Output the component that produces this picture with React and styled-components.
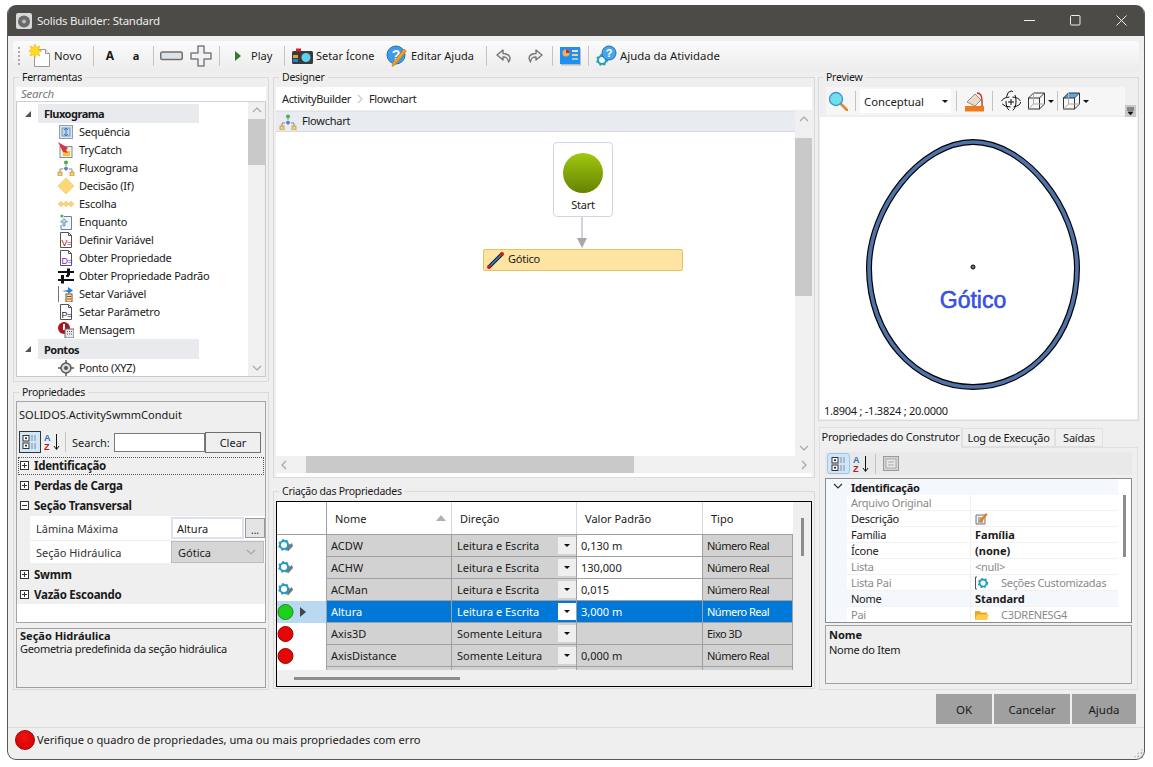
import React from 'react';
import styled, { createGlobalStyle } from 'styled-components';

const GlobalStyle = createGlobalStyle`
  html, body { margin: 0; padding: 0; background: #fff; }
  body { font-family: "Noto Sans", sans-serif; font-size: 11px; letter-spacing: -0.25px; color: #1a1a1a; }
  * { box-sizing: border-box; }
  #root { width: 1153px; height: 767px; overflow: hidden; }
`;

const Page = styled.div`
  width: 1153px;
  height: 767px;
  padding: 5px 8px 7px 7px;
`;

const Win = styled.div`
  height: 755px;
  display: flex;
  flex-direction: column;
  background: #efefef;
  border: 1px solid #5a5855;
  border-top: 0;
  border-radius: 9px;
  overflow: hidden;
`;

const TitleBar = styled.div`
  height: 31px;
  flex: none;
  background: #4d4b48;
  color: #ececec;
  display: flex;
  align-items: center;
  padding-left: 8px;
  font-size: 11.5px;
`;

const TitleText = styled.span`
  margin-left: 5px;
  flex: 1;
`;

const WinBtn = styled.div`
  width: 46px;
  height: 31px;
  display: flex;
  align-items: center;
  justify-content: center;
`;

const Toolbar = styled.div`
  height: 30px;
  flex: none;
  margin: 5px 5px 0;
  display: flex;
  align-items: center;
  background: linear-gradient(#fbfbfb, #ececec);
  border-radius: 3px 3px 0 0;
  letter-spacing: 0;
`;

const Grip = styled.div`
  width: 2px;
  height: 18px;
  margin-left: 5px;
  background: repeating-linear-gradient(#a8a8a8 0 2px, transparent 2px 4px);
`;

const Tool = styled.div`
  width: ${p => p.$w}px;
  margin-left: ${p => p.$ml || 0}px;
  flex: none;
  display: flex;
  align-items: center;
  gap: 3px;
  white-space: nowrap;
  font-size: ${p => p.$size || 11}px;
  font-weight: ${p => (p.$bold ? 700 : 400)};
  justify-content: ${p => (p.$center ? 'center' : 'flex-start')};
`;

const ToolText = styled.span`
  margin-top: -2px;
  font-size: ${p => p.$size || 11}px;
`;

const Sep = styled.div`
  width: 1px;
  height: 20px;
  flex: none;
  margin-left: ${p => p.$ml || 0}px;
  background: #c4c4c4;
`;

const Main = styled.div`
  height: 619px;
  flex: none;
  margin: 0 5px;
  display: flex;
  gap: 4px;
`;

const Col = styled.div`
  width: ${p => p.$w}px;
  margin-left: ${p => p.$ml || 0}px;
  flex: none;
  display: flex;
  flex-direction: column;
`;

const Group = styled.fieldset`
  margin: ${p => p.$mt || 0}px 0 0;
  padding: ${p => p.$pt ?? 4}px ${p => p.$px ?? 2}px 0;
  height: ${p => p.$h}px;
  min-width: 0;
  flex: none;
  border: 1px solid #dadada;
  display: flex;
  flex-direction: column;
`;

const Legend = styled.legend`
  margin-left: 3px;
  padding: 0 3px;
  font-size: 10.5px;
  letter-spacing: -0.25px;
  line-height: 13px;
  height: 12px;
`;

const SearchBar = styled.div`
  height: 15px;
  flex: none;
  background: #fff;
  border-bottom: 1px solid #ccd0da;
  padding-left: 5px;
  font-style: italic;
  color: #777;
  font-size: 11.5px;
  line-height: 14px;
`;

const TreeBox = styled.div`
  height: 275px;
  flex: none;
  display: flex;
  background: #fff;
  border: 1px solid #c6cad2;
  border-top: 0;
`;

const TreeList = styled.div`
  flex: 1;
  padding-top: 2px;
  overflow: hidden;
`;

const TreeCat = styled.div`
  height: ${p => p.$h}px;
  display: flex;
  align-items: center;
  padding-left: 7px;
`;

const CatLabel = styled.div`
  margin-left: 6px;
  width: 161px;
  height: 100%;
  background: #e8eaed;
  font-weight: 700;
  letter-spacing: -0.5px;
  padding-left: 6px;
  display: flex;
  align-items: center;
`;

const TreeItem = styled.div`
  height: 18px;
  display: flex;
  align-items: center;
  padding: 0 0 2px 40px;
  white-space: nowrap;
`;

const TreeIcon = styled.span`
  width: 18px;
  height: 18px;
  margin: 2px 4px 0 0;
  display: flex;
  align-items: center;
  justify-content: center;
`;

const VBar = styled.div`
  width: 17px;
  flex: none;
  display: flex;
  flex-direction: column;
  background: #f0f0f0;
`;

const VArrow = styled.div`
  height: 17px;
  flex: none;
  display: flex;
  align-items: center;
  justify-content: center;
  margin-top: ${p => (p.$end ? 'auto' : 0)};
`;

const VThumb = styled.div`
  height: ${p => p.$h}px;
  margin-top: ${p => p.$mt || 0}px;
  flex: none;
  background: #c9c9c9;
`;

const PropBox = styled.div`
  height: 222px;
  flex: none;
  border: 1px solid #a6a6a6;
  display: flex;
  flex-direction: column;
  background: #efefef;
  letter-spacing: 0;
`;

const TypeName = styled.div`
  height: 26px;
  flex: none;
  padding: 0 0 2px 2px;
  display: flex;
  align-items: center;
`;

const PropTools = styled.div`
  height: 28px;
  flex: none;
  display: flex;
  align-items: center;
  padding-left: 2px;
`;

const SelIcon = styled.div`
  width: ${p => p.$w}px;
  height: ${p => p.$h}px;
  flex: none;
  display: flex;
  align-items: center;
  justify-content: center;
  background: #cfe5f8;
  border: 1px solid ${p => p.$line};
  border-radius: ${p => p.$r || 0}px;
`;

const PlainIcon = styled.div`
  margin-left: ${p => p.$ml || 0}px;
  flex: none;
  display: flex;
  align-items: center;
`;

const FilterLabel = styled.span`
  margin-left: 6px;
  width: 42px;
  flex: none;
`;

const FilterInput = styled.div`
  width: 91px;
  height: 19px;
  flex: none;
  background: #fff;
  border: 1px solid #7a7a7a;
`;

const ClearBtn = styled.div`
  width: 56px;
  height: 21px;
  flex: none;
  border: 1px solid #707070;
  background: #efefef;
  display: flex;
  align-items: center;
  justify-content: center;
`;

const PCat = styled.div`
  height: 20px;
  flex: none;
  display: flex;
  align-items: center;
  gap: 5px;
  padding: 0 0 ${p => (p.$up ? 2 : 0)}px 1px;
  font-weight: 700;
  font-size: 11.5px;
  letter-spacing: -0.25px;
  outline: ${p => (p.$focus ? '1px dotted #555' : 'none')};
  outline-offset: -2px;
`;

const PlusBox = styled.span`
  width: 9px;
  height: 9px;
  flex: none;
  margin-left: 2px;
  border: 1px solid #333;
  background: #fff;
  position: relative;
  &::before {
    content: '';
    position: absolute;
    left: 1px;
    right: 1px;
    top: 3px;
    height: 1px;
    background: #333;
  }
  &::after {
    content: '';
    display: ${p => (p.$open ? 'none' : 'block')};
    position: absolute;
    top: 1px;
    bottom: 1px;
    left: 3px;
    width: 1px;
    background: #333;
  }
`;

const PRow = styled.div`
  height: ${p => p.$h}px;
  flex: none;
  margin-left: 13px;
  display: flex;
  background: #fff;
  border-bottom: 1px solid #efefef;
`;

const PLabel = styled.div`
  width: 141px;
  flex: none;
  padding-left: 6px;
  display: flex;
  align-items: center;
  color: #333;
`;

const PInput = styled.div`
  width: 73px;
  flex: none;
  margin-top: 1px;
  height: 22px;
  background: #fff;
  border: 2px solid #dde3ee;
  padding-left: 4px;
  display: flex;
  align-items: center;
`;

const DotsBtn = styled.div`
  width: 20px;
  height: 20px;
  margin: 2px 0 0 1px;
  background: #e4e4e4;
  border: 1px solid #9a9a9a;
  display: flex;
  align-items: flex-end;
  justify-content: center;
  line-height: 14px;
  font-size: 10px;
`;

const PCombo = styled.div`
  width: 93px;
  flex: none;
  background: #d6d6d6;
  border: 1px solid #bdbdbd;
  padding: 0 6px;
  display: flex;
  align-items: center;
  justify-content: space-between;
`;

const PFill = styled.div`
  flex: 1;
  background: #fff;
`;

const HelpBox = styled.div`
  height: ${p => p.$h}px;
  margin-top: ${p => p.$mt}px;
  flex: none;
  border: 1px solid #a0a0a0;
  padding: ${p => p.$pt}px 3px 0;
  line-height: ${p => p.$lh}px;
  background: #efefef;
  letter-spacing: -0.3px;
`;

const HelpTitle = styled.div`
  font-weight: 700;
  letter-spacing: 0;
`;

const Crumb = styled.div`
  height: 23px;
  flex: none;
  background: #fff;
  display: flex;
  align-items: center;
  padding-left: 6px;
  gap: 3px;
  color: #222;
  letter-spacing: -0.35px;
`;

const DesignerBody = styled.div`
  margin-top: 1px;
  height: 345px;
  flex: none;
  display: flex;
`;

const DesignerMain = styled.div`
  flex: 1;
  display: flex;
  flex-direction: column;
  background: #fff;
`;

const FlowHead = styled.div`
  height: 21px;
  flex: none;
  background: #e8ebef;
  border-top: 1px solid #dfe2e8;
  border-bottom: 1px solid #d6d9e4;
  display: flex;
  align-items: center;
  padding-left: 3px;
  gap: 5px;
`;

const FlowHeadText = styled.span`
  margin-top: -3px;
`;

const Canvas = styled.div`
  flex: 1;
  position: relative;
`;

const StartNode = styled.div`
  position: absolute;
  left: 277px;
  top: 10px;
  width: 60px;
  height: 75px;
  background: #fff;
  border: 1px solid #d0d6e4;
  border-radius: 4px;
  display: flex;
  flex-direction: column;
  align-items: center;
  padding-top: 10px;
`;

const StartDot = styled.div`
  width: 40px;
  height: 40px;
  border-radius: 50%;
  background: linear-gradient(#a0c810, #668200);
`;

const StartLabel = styled.div`
  margin-top: 4px;
`;

const Connector = styled.svg`
  position: absolute;
  left: 295px;
  top: 85px;
`;

const ActivityNode = styled.div`
  position: absolute;
  left: 207px;
  top: 117px;
  width: 200px;
  height: 22px;
  background: #fde4a2;
  border: 1px solid #e3c264;
  border-radius: 2px;
  display: flex;
  align-items: center;
  padding-left: 2px;
  gap: 3px;
`;

const ActivityText = styled.span`
  margin-top: -3px;
`;

const HBar = styled.div`
  height: 17px;
  flex: none;
  background: #f0f0f0;
  display: flex;
  align-items: center;
`;

const HArrow = styled.div`
  width: 17px;
  flex: none;
  display: flex;
  justify-content: center;
  margin-left: ${p => (p.$end ? 'auto' : 0)};
`;

const HThumb = styled.div`
  height: 17px;
  width: ${p => p.$w}px;
  margin-left: ${p => p.$ml}px;
  background: #c9c9c9;
`;

const WhiteStrip = styled.div`
  height: 4px;
  flex: none;
  background: #fff;
`;

const TableBox = styled.div`
  height: 186px;
  flex: none;
  border: 1px solid #000;
  display: flex;
  flex-direction: column;
  background: #efefef;
  letter-spacing: 0;
`;

const TableMid = styled.div`
  height: 168px;
  flex: none;
  display: flex;
`;

const TableGrid = styled.div`
  width: 516px;
  flex: none;
  overflow: hidden;
  background: #fff;
`;

const THeadRow = styled.div`
  height: 33px;
  display: grid;
  grid-template-columns: 50px 125px 125px 126px 90px;
  border-bottom: 1px solid #a0a0a0;
`;

const THead = styled.div`
  display: flex;
  align-items: center;
  justify-content: space-between;
  padding: 0 5px 0 8px;
  border-right: 1px solid #d8d8d8;
  &:first-child {
    border-right-color: #a0a0a0;
  }
  &:last-child {
    border-right: 0;
  }
`;

const TRow = styled.div`
  height: 22px;
  display: grid;
  grid-template-columns: 50px 125px 125px 126px 90px;
`;

const RowHead = styled.div`
  display: flex;
  align-items: center;
  gap: 5px;
  background: ${p => (p.$sel ? '#b9d9f2' : '#fff')};
  border-right: 1px solid #a0a0a0;
`;

const Cell = styled.div`
  display: flex;
  align-items: center;
  padding-left: ${p => (p.$combo ? 5 : 4)}px;
  white-space: nowrap;
  border-right: 1px solid #a0a0a0;
  border-bottom: 1px solid #a0a0a0;
  background: ${p => (p.$sel ? '#0078d7' : p.$white ? '#fff' : '#d2d2d2')};
  color: ${p => (p.$sel ? '#fff' : '#1a1a1a')};
  letter-spacing: ${p => (p.$tight ? '-0.5px' : '0')};
`;

const DropBtn = styled.div`
  width: 18px;
  height: 17px;
  margin-left: auto;
  display: flex;
  align-items: center;
  justify-content: center;
  background: ${p => (p.$sel ? '#fff' : '#efefef')};
  &::after {
    content: '';
    border-left: 3px solid transparent;
    border-right: 3px solid transparent;
    border-top: 3px solid #111;
  }
`;

const TScroll = styled.div`
  flex: 1;
  display: flex;
  justify-content: center;
`;

const TScrollThumb = styled.div`
  width: 3px;
  height: 38px;
  margin-top: 16px;
  background: #8c8c8c;
`;

const TBottom = styled.div`
  flex: 1;
  padding: 7px 0 0 17px;
`;

const TBottomThumb = styled.div`
  width: 166px;
  height: 3px;
  background: #8c8c8c;
`;

const PreviewTools = styled.div`
  height: 28px;
  flex: none;
  margin: 0 12px 2px 6px;
  display: flex;
  align-items: center;
  background: #f6f6f6;
  position: relative;
  letter-spacing: 0;
`;

const Overflow = styled.div`
  position: absolute;
  right: -11px;
  bottom: -2px;
  width: 11px;
  height: 12px;
  background: #c8c8c8;
  display: flex;
  align-items: center;
  justify-content: center;
`;

const ComboBox = styled.div`
  width: 91px;
  margin-left: 4px;
  height: 24px;
  flex: none;
  background: #fff;
  display: flex;
  align-items: center;
  justify-content: space-between;
  padding: 0 3px 0 4px;
  font-size: 11.3px;
`;

const ComboArrow = styled.span`
  border-left: 3px solid transparent;
  border-right: 3px solid transparent;
  border-top: 3px solid #111;
`;

const Surface = styled.div`
  flex: 1;
  background: #fff;
  display: flex;
  flex-direction: column;
`;

const ShapeView = styled.svg`
  display: block;
  flex: none;
`;

const Coords = styled.div`
  height: 18px;
  flex: none;
  padding-left: 4px;
  display: flex;
  align-items: center;
`;

const Tabs = styled.div`
  margin-top: 6px;
  height: 20px;
  flex: none;
  display: flex;
  align-items: flex-end;
  padding-left: 1px;
  position: relative;
  z-index: 1;
`;

const Tab = styled.div`
  width: ${p => p.$w}px;
  height: ${p => (p.$active ? 21 : 19)}px;
  margin-bottom: ${p => (p.$active ? -1 : 0)}px;
  padding-bottom: ${p => (p.$active ? 3 : 0)}px;
  flex: none;
  background: #f0f0f0;
  border: 1px solid #e0e0e0;
  border-bottom: ${p => (p.$active ? '0' : '1px solid #e0e0e0')};
  display: flex;
  align-items: center;
  justify-content: center;
  white-space: nowrap;
`;

const TabPanel = styled.div`
  width: 319px;
  margin-left: 1px;
  height: 243px;
  flex: none;
  border: 1px solid #e0e0e0;
  padding: 4px 5px 0 5px;
  display: flex;
  flex-direction: column;
`;

const PanelTools = styled.div`
  height: 23px;
  flex: none;
  background: #e9e9e9;
  display: flex;
  align-items: center;
  padding-left: 2px;
`;

const PGrid = styled.div`
  margin-top: 3px;
  height: 145px;
  flex: none;
  border: 1px solid #8c8c8c;
  display: flex;
  background: #fff;
  overflow: hidden;
`;

const PGridRows = styled.div`
  width: 292px;
  flex: none;
`;

const GridCat = styled.div`
  height: 16px;
  background: #f4f7fb;
  display: flex;
  align-items: center;
  font-weight: 700;
  padding-left: 25px;
  position: relative;
`;

const GridChevron = styled.span`
  position: absolute;
  left: 6px;
  top: 1px;
  display: flex;
`;

const GridRow = styled.div`
  height: 16px;
  display: flex;
  margin-left: 21px;
  background: ${p => (p.$hi ? '#f4f7fb' : '#fff')};
  border-bottom: 1px solid #f2f2f2;
`;

const GridGutter = styled.div`
  background: #f4f7fb;
`;

const GridName = styled.div`
  width: 124px;
  flex: none;
  padding-left: 4px;
  border-right: 1px solid #f0f0f0;
  display: flex;
  align-items: center;
  color: ${p => (p.$muted ? '#8a8a8a' : '#1a1a1a')};
`;

const GridValue = styled.div`
  flex: 1;
  padding-left: 4px;
  display: flex;
  align-items: center;
  gap: 12px;
  white-space: nowrap;
  font-weight: ${p => (p.$bold ? 700 : 400)};
  letter-spacing: ${p => (p.$bold ? 0 : '-0.3px')};
  color: ${p => (p.$muted ? '#8a8a8a' : '#1a1a1a')};
`;

const GridScroll = styled.div`
  flex: 1;
  display: flex;
  justify-content: center;
`;

const GridThumb = styled.div`
  width: 3px;
  height: 62px;
  margin-top: 16px;
  background: #8c8c8c;
`;

const ButtonRow = styled.div`
  height: 30px;
  flex: none;
  margin: 4px 8px 0 0;
  display: flex;
  justify-content: flex-end;
  gap: 2px;
  letter-spacing: 0;
`;

const Btn = styled.div`
  width: ${p => p.$w}px;
  background: #a0a0a0;
  display: flex;
  align-items: center;
  justify-content: center;
  font-size: 11.5px;
`;

const BottomLine = styled.div`
  height: 1px;
  flex: none;
  margin-top: 3px;
  background: #dcdcdc;
`;

const StatusBar = styled.div`
  flex: 1;
  display: flex;
  align-items: center;
  padding: 0 0 8px 7px;
  position: relative;
  letter-spacing: 0;
  font-size: 11.15px;
`;

const StatusDot = styled.div`
  width: 20px;
  height: 20px;
  flex: none;
  margin-right: 2px;
  border-radius: 50%;
  background: radial-gradient(circle at 45% 35%, #f51010, #c80000);
  border: 1px solid #a00000;
`;

const SizeGrip = styled.div`
  position: absolute;
  right: 1px;
  bottom: 1px;
  width: 10px;
  height: 10px;
  background: radial-gradient(circle, #b0b0b0 1px, transparent 1.2px) 0 0 / 3.4px 3.4px;
  clip-path: polygon(100% 0, 100% 100%, 0 100%);
`;

const IconSvg = styled.svg`
  display: block;
  flex: none;
`;

const Ic = ({ w = 16, h = 16, children }) => (
  <IconSvg width={w} height={h} viewBox={`0 0 ${w} ${h}`}>
    {children}
  </IconSvg>
);

const Gear = ({ x = 8, y = 8, r = 5, c = '#1a9ab8' }) => (
  <g>
    <circle cx={x} cy={y} r={r} fill="none" stroke={c} strokeWidth={r * 0.5} />
    <circle cx={x} cy={y} r={r * 1.25} fill="none" stroke={c} strokeWidth={r * 0.45} strokeDasharray={`${r * 0.5} ${r * 0.55}`} />
  </g>
);

const NovoIcon = () => (
  <Ic w={22} h={24}>
    <path d="M5.5 5.5h11l4 4v13h-15z" fill="#fff" stroke="#999" />
    <path d="M16.5 5.5v4h4" fill="#eee" stroke="#999" />
    <path d="M6 0l1.4 3.4L11 2l-1.6 3.6L13 7l-3.6 1.4L11 12 7.4 10.4 6 14 4.6 10.4 1 12l1.6-3.6L-1 7l3.6-1.4L1 2l3.6 1.4z" fill="#ffdc1e" stroke="#f0a800" strokeWidth=".5" />
  </Ic>
);

const MinusIcon = () => (
  <Ic w={23} h={12}>
    <rect x=".75" y="2" width="21.5" height="7.5" rx="1.5" fill="#dde2e8" stroke="#6f6f6f" strokeWidth="1.5" />
  </Ic>
);

const PlusIcon = () => (
  <Ic w={22} h={22}>
    <path d="M8 1h6v7h7v6h-7v7H8v-7H1V8h7z" fill="#f0f2f5" stroke="#7d7d7d" strokeWidth="1.5" strokeLinejoin="round" />
  </Ic>
);

const PlayIcon = () => (
  <Ic w={9} h={12}>
    <path d="M2 1l6 5-6 5z" fill="#2f7d2f" />
  </Ic>
);

const CameraIcon = () => (
  <Ic w={21} h={16}>
    <rect x="0" y="3" width="21" height="13" rx="1.5" fill="#3a3a3a" />
    <rect x="4" y="0.5" width="5" height="3" fill="#e02020" />
    <rect x="1" y="7" width="5" height="3" fill="#f0a020" />
    <rect x="1" y="11" width="5" height="3" fill="#1e80e0" />
    <circle cx="14" cy="9.5" r="4.5" fill="#5fd0f0" />
  </Ic>
);

const HelpPenIcon = () => (
  <Ic w={22} h={22}>
    <circle cx="10" cy="10" r="9" fill="#3f9be8" stroke="#1d6fc0" />
    <text x="10" y="15" fontSize="14" fontWeight="700" fill="#fff" textAnchor="middle" fontFamily="Liberation Sans, sans-serif">?</text>
    <path d="M20.5 6L9 20l-3 1.5.5-3.5L18 4z" fill="#f0a020" stroke="#c86a00" strokeWidth=".5" />
  </Ic>
);

const UndoIcon = ({ flip }) => (
  <Ic w={17} h={15}>
    <g transform={flip ? 'translate(17 0) scale(-1 1)' : undefined}>
      <path d="M7 1L1 6l6 5V8c3.5 0 5 1 5.5 5 2.5-3 2.5-8-5.5-8.5z" fill="#eceff2" stroke="#777" strokeWidth="1.4" strokeLinejoin="round" />
    </g>
  </Ic>
);

const ChartIcon = () => (
  <Ic w={21} h={19}>
    <rect x="1" y="1.5" width="20" height="17" fill="#bbb" />
    <rect x="0" y="0" width="20" height="17" fill="#1e90f0" />
    <circle cx="6" cy="6" r="3.5" fill="#f0b060" />
    <path d="M6 6V2.5A3.5 3.5 0 0 1 9.5 6z" fill="#e02020" />
    <rect x="12" y="3" width="6" height="2" fill="#f4e0a0" />
    <rect x="12" y="7" width="6" height="2" fill="#e8d0a0" />
    <rect x="12" y="11" width="6" height="2" fill="#a8c0d8" />
  </Ic>
);

const GearHelpIcon = () => (
  <Ic w={22} h={22}>
    <Gear x={7} y={15} r={4} c="#2a9fb4" />
    <circle cx="14" cy="8" r="7" fill="#4aa6e8" stroke="#1d6fc0" />
    <text x="14" y="12" fontSize="11" fontWeight="700" fill="#fff" textAnchor="middle" fontFamily="Liberation Sans, sans-serif">?</text>
  </Ic>
);

const Tri = () => (
  <Ic w={8} h={8}>
    <path d="M7 1v6H1z" fill="#555" />
  </Ic>
);

const Chevron = ({ d, c = '#a6a6a6' }) => {
  const paths = {
    up: 'M2 7l4-4 4 4',
    down: 'M2 4l4 4 4-4',
    left: 'M7 2L3 6l4 4',
    right: 'M4 2l4 4-4 4',
  };
  return (
    <Ic w={12} h={12}>
      <path d={paths[d]} fill="none" stroke={c} strokeWidth="1.2" />
    </Ic>
  );
};

const SeqIcon = () => (
  <Ic>
    <rect x="1.5" y="1.5" width="13" height="13" fill="#dbe6f0" stroke="#8aa0b4" />
    <rect x="4" y="4" width="8" height="8" fill="#bcd4ea" stroke="#7d98b0" />
    <path d="M8 4v8M6 10l2 2 2-2M6 6l2-2 2 2" stroke="#3a78c0" fill="none" />
  </Ic>
);

const TryIcon = () => (
  <Ic>
    <rect x="2" y="4.5" width="12" height="11" fill="#f0f0e8" stroke="#8a8a8a" />
    <rect x="5" y="9" width="7" height="5" fill="#f4c040" />
    <path d="M0 0l10 6-2 2 2 3-5-1z" fill="#e03040" />
  </Ic>
);

const FlowIcon = () => (
  <Ic w={18} h={16}>
    <circle cx="9" cy="2.5" r="2" fill="#4caf50" />
    <path d="M8 7h2l1.5 1.5L9 11 6.5 8.5z" fill="#5a86c8" />
    <path d="M9 4.5v2M3 14V9h3M15 14V9h-3" stroke="#8a8a8a" fill="none" />
    <rect x="1" y="12" width="4" height="4" fill="#f4d070" stroke="#b08030" strokeWidth=".6" />
    <rect x="13" y="12" width="4" height="4" fill="#f4d070" stroke="#b08030" strokeWidth=".6" />
  </Ic>
);

const DiamondIcon = () => (
  <Ic>
    <path d="M8 0l8 8-8 8-8-8z" fill="#fdd774" stroke="#e8c060" strokeWidth=".5" />
  </Ic>
);

const ChoiceIcon = () => (
  <Ic>
    <path d="M3 5l3 3-3 3-3-3zM8 5l3 3-3 3-3-3zM13 5l3 3-3 3-3-3z" fill="#fbd37c" stroke="#e8bc60" strokeWidth=".4" />
  </Ic>
);

const WhileIcon = () => (
  <Ic>
    <path d="M6 2.5h7.5v13H3V11" fill="#f2f6fb" stroke="#6e8296" />
    <circle cx="4" cy="2" r="1.6" fill="#4caf50" />
    <path d="M5 12V8H2.5L6 4.5 9.5 8H7v4z" fill="#bcd8f0" stroke="#4d7eb0" strokeWidth=".7" />
  </Ic>
);

const DocIcon = ({ label, color }) => (
  <Ic>
    <path d="M2.5.5h8l3 3v12h-11z" fill="#fff" stroke="#555" />
    <path d="M10.5.5v3h3" fill="none" stroke="#555" />
    <text x="3.5" y="13.5" fontSize="9" letterSpacing="-.5" fontFamily="Liberation Sans, sans-serif" fill={color}>{label}</text>
  </Ic>
);

const SlidersIcon = () => (
  <Ic>
    <path d="M0 4h16M0 12h16" stroke="#111" strokeWidth="2" />
    <path d="M3 8h10" stroke="#111" strokeWidth="2" strokeDasharray="3 2" />
    <rect x="9" y="0.5" width="3" height="7" fill="#111" />
    <rect x="3" y="8.5" width="3" height="7" fill="#111" />
  </Ic>
);

const SetVarIcon = () => (
  <Ic>
    <path d="M.5 0v16" stroke="#777" />
    <rect x="8" y="8" width="6" height="8" fill="#f2e2c8" stroke="#8a4a10" />
    <path d="M9 10.5h4M9 13h4" stroke="#8a4a10" />
    <path d="M4 5l6-1V1l5 3.5-5 3.5V6z" fill="#2a7fd8" />
  </Ic>
);

const MsgIcon = () => (
  <Ic>
    <circle cx="6" cy="6" r="6" fill="#a81820" />
    <rect x="5" y="2" width="2" height="6" fill="#fff" />
    <rect x="7" y="7" width="9" height="9" fill="#e8e8e8" stroke="#666" />
    <path d="M9 9.5h1M11 9.5h1M13 9.5h1M9 12h1M11 12h1M13 12h1" stroke="#555" />
  </Ic>
);

const PointIcon = () => (
  <Ic>
    <circle cx="8" cy="8" r="5" fill="#d8d8d8" stroke="#555" strokeWidth="1.4" />
    <circle cx="8" cy="8" r="2" fill="#555" />
    <path d="M8 0v3M8 13v3M0 8h3M13 8h3" stroke="#555" strokeWidth="1.4" />
  </Ic>
);

const PencilLine = () => (
  <Ic w={19} h={19}>
    <path d="M3 16L16 3" stroke="#111" strokeWidth="3.5" />
    <path d="M3.5 15.5L15.5 3.5" stroke="#3a80e0" strokeWidth="1.6" />
    <circle cx="3" cy="16" r="2" fill="#d01818" />
    <circle cx="16" cy="3" r="2" fill="#d01818" />
  </Ic>
);

const CategorizedIcon = () => (
  <Ic w={16} h={16}>
    <rect x="1" y="1.5" width="6" height="5.5" fill="#fff" stroke="#333" />
    <rect x="1" y="9" width="6" height="5.5" fill="#fff" stroke="#333" />
    <path d="M3 4.2h2M3 11.7h2M4 3.2v2M4 10.7v2" stroke="#111" />
    <path d="M9 2h6M9 4h6M9 6h6M9 10h6M9 12h6M9 14h6" stroke="#7d8da0" strokeDasharray="2 1" />
  </Ic>
);

const AZIcon = () => (
  <Ic w={16} h={18}>
    <text x="0" y="8" fontSize="9" fontWeight="700" fill="#2a70c8" fontFamily="Liberation Sans, sans-serif">A</text>
    <text x="0" y="17" fontSize="9" fontWeight="700" fill="#b02020" fontFamily="Liberation Sans, sans-serif">Z</text>
    <path d="M12.5 1v15M10 13l2.5 3.5L15 13" stroke="#111" fill="none" />
  </Ic>
);

const PagesIcon = () => (
  <Ic w={16} h={15}>
    <rect x=".5" y=".5" width="15" height="14" fill="#d4d4d4" stroke="#9a9a9a" />
    <rect x="3" y="3" width="10" height="9" fill="#e8e8e8" stroke="#a8a8a8" />
    <path d="M5 6h6M5 9h6" stroke="#a8a8a8" />
  </Ic>
);

const MagnifierIcon = () => (
  <Ic w={20} h={20}>
    <path d="M12 12l7 7" stroke="#e08a30" strokeWidth="2.6" strokeLinecap="round" />
    <circle cx="8" cy="8" r="6.5" fill="#6fe0e8" stroke="#4a90e0" strokeWidth="1.4" />
  </Ic>
);

const BucketIcon = () => (
  <Ic w={20} h={21}>
    <path d="M2 11l8-8 6 6-6 6z" fill="#eadcc8" stroke="#9a8a78" />
    <path d="M12 2c3 0 5 2 5 8v5" fill="none" stroke="#c83020" strokeWidth="1.4" />
    <rect x="0" y="15" width="19" height="5.5" fill="#ee7a20" />
  </Ic>
);

const OrbitIcon = () => (
  <Ic w={22} h={22}>
    <ellipse cx="11" cy="12" rx="9.5" ry="5" fill="none" stroke="#111" strokeDasharray="9 3" />
    <ellipse cx="11" cy="11" rx="5" ry="10" fill="none" stroke="#111" strokeDasharray="10 4" />
    <path d="M11 9v6M8 12h6" stroke="#111" />
  </Ic>
);

const CubeIcon = ({ shaded }) => (
  <Ic w={18} h={18}>
    {shaded && <path d="M1 6l5-5h11l-5 5z" fill="#5ba8e0" />}
    <rect x="1.5" y="6" width="11" height="11" fill="none" stroke="#333" />
    <path d="M1.5 6l5-5h11v11l-5 5M17.5 1l-5 5" fill="none" stroke="#333" />
    <path d="M6.5 1v11h11M6.5 12l-5 5" fill="none" stroke="#aaa" />
  </Ic>
);

const RowGear = () => (
  <Ic w={17} h={18}>
    <path d="M9 11l6-5 1 3-5 5.5z" fill="#777" />
    <Gear x={7} y={8} r={4} c="#2a9ac0" />
  </Ic>
);

const Led = ({ c, d }) => (
  <Ic w={17} h={18}>
    <circle cx="8.5" cy="9" r="7.5" fill={c} stroke={d} />
  </Ic>
);

const SmallGear = () => (
  <Ic w={14} h={14}>
    <path d="M2 1H.5v12H2" fill="none" stroke="#555" />
    <Gear x={8} y={7} r={3.5} c="#1f9cc0" />
  </Ic>
);

const FolderIcon = () => (
  <Ic w={14} h={12}>
    <path d="M0 2h5l1 1.5h6V11H0z" fill="#f0a818" />
    <path d="M2 5.5h12L12 11H0z" fill="#fccc50" />
  </Ic>
);

const EditIcon = () => (
  <Ic w={13} h={13}>
    <path d="M1 3h9v9H1z" fill="#eee" stroke="#777" />
    <path d="M3 6h4M3 8h5M3 10h5" stroke="#777" />
    <path d="M4 9l7-8 1.5 1.5L6 10.5z" fill="#e87a18" />
  </Ic>
);

const treeItems = [
  ['Sequência', <SeqIcon />],
  ['TryCatch', <TryIcon />],
  ['Fluxograma', <FlowIcon />],
  ['Decisão (If)', <DiamondIcon />],
  ['Escolha', <ChoiceIcon />],
  ['Enquanto', <WhileIcon />],
  ['Definir Variável', <DocIcon label="V=" color="#b01020" />],
  ['Obter Propriedade', <DocIcon label="D=" color="#8020e0" />],
  ['Obter Propriedade Padrão', <SlidersIcon />],
  ['Setar Variável', <SetVarIcon />],
  ['Setar Parâmetro', <DocIcon label="P=" color="#222" />],
  ['Mensagem', <MsgIcon />],
];

const rows = [
  { icon: 'gear', name: 'ACDW', dir: 'Leitura e Escrita', val: '0,130 m', type: 'Número Real', white: true },
  { icon: 'gear', name: 'ACHW', dir: 'Leitura e Escrita', val: '130,000', type: 'Número Real', white: true },
  { icon: 'gear', name: 'ACMan', dir: 'Leitura e Escrita', val: '0,015', type: 'Número Real', white: true },
  { icon: 'green', name: 'Altura', dir: 'Leitura e Escrita', val: '3,000 m', type: 'Número Real', sel: true },
  { icon: 'red', name: 'Axis3D', dir: 'Somente Leitura', val: '', type: 'Eixo 3D' },
  { icon: 'red', name: 'AxisDistance', dir: 'Somente Leitura', val: '0,000 m', type: 'Número Real' },
  { icon: 'none', name: '', dir: '', val: '', type: '' },
];

const gridRows = [
  { n: 'Arquivo Original', muted: true },
  { n: 'Descrição', v: <EditIcon /> },
  { n: 'Família', v: 'Família', bold: true },
  { n: 'Ícone', v: '(none)', bold: true },
  { n: 'Lista', v: '<null>', muted: true, vm: true },
  { n: 'Lista Pai', v: <><SmallGear /><span>Seções Customizadas</span></>, muted: true, vm: true },
  { n: 'Nome', v: 'Standard', bold: true, hi: true },
  { n: 'Pai', v: <><FolderIcon /><span>C3DRENESG4</span></>, muted: true, vm: true },
];

const eggPath = 'M973 142C1025 142 1077 208 1077 268C1077 335 1031 387 973 387C915 387 869 335 869 268C869 208 921 142 973 142Z';

export default function App() {
  return (
    <Page>
      <GlobalStyle />
      <Win>
        <TitleBar>
          <Ic w={16} h={16}>
            <rect x="0" y="0" width="16" height="16" rx="2" fill="#d8d8d8" />
            <circle cx="8" cy="8.5" r="6" fill="#6a6a6a" />
            <circle cx="8" cy="8.5" r="2" fill="#bbb" />
          </Ic>
          <TitleText>Solids Builder: Standard</TitleText>
          <WinBtn>
            <Ic w={11} h={11}><path d="M0 5.5h11" stroke="#eee" /></Ic>
          </WinBtn>
          <WinBtn>
            <Ic w={11} h={11}><rect x=".5" y=".5" width="9.5" height="9.5" rx="1" fill="none" stroke="#eee" /></Ic>
          </WinBtn>
          <WinBtn>
            <Ic w={11} h={11}><path d="M.5.5l10 10M10.5.5l-10 10" stroke="#eee" /></Ic>
          </WinBtn>
        </TitleBar>

        <Toolbar>
          <Grip />
          <Tool $w={54} $ml={9}><NovoIcon /><ToolText $size={11.3}>Novo</ToolText></Tool>
          <Sep $ml={10} />
          <Tool $w={10} $ml={11} $bold $center $size={12}><ToolText $size={12}>A</ToolText></Tool>
          <Tool $w={10} $ml={16} $bold $center><ToolText>a</ToolText></Tool>
          <Sep $ml={12} />
          <Tool $w={23} $ml={6}><MinusIcon /></Tool>
          <Tool $w={22} $ml={7}><PlusIcon /></Tool>
          <Sep $ml={7} />
          <Tool $w={9} $ml={13}><PlayIcon /></Tool>
          <Tool $w={23} $ml={9}><ToolText>Play</ToolText></Tool>
          <Sep $ml={10} />
          <Tool $w={83} $ml={7}><CameraIcon /><ToolText>Setar Ícone</ToolText></Tool>
          <Tool $w={90} $ml={11}><HelpPenIcon /><ToolText>Editar Ajuda</ToolText></Tool>
          <Sep $ml={10} />
          <Tool $w={17} $ml={9}><UndoIcon /></Tool>
          <Tool $w={17} $ml={13}><UndoIcon flip /></Tool>
          <Sep $ml={9} />
          <Tool $w={21} $ml={7}><ChartIcon /></Tool>
          <Sep $ml={7} />
          <Tool $w={126} $ml={6}><GearHelpIcon /><ToolText $size={11.4}>Ajuda da Atividade</ToolText></Tool>
        </Toolbar>

        <Main>
          <Col $w={256}>
            <Group $h={311}>
              <Legend>Ferramentas</Legend>
              <SearchBar>Search</SearchBar>
              <TreeBox>
                <TreeList>
                  <TreeCat $h={19}><Tri /><CatLabel>Fluxograma</CatLabel></TreeCat>
                  {treeItems.map(([label, icon]) => (
                    <TreeItem key={label}>
                      <TreeIcon>{icon}</TreeIcon>
                      {label}
                    </TreeItem>
                  ))}
                  <TreeCat $h={20}><Tri /><CatLabel>Pontos</CatLabel></TreeCat>
                  <TreeItem>
                    <TreeIcon><PointIcon /></TreeIcon>
                    Ponto (XYZ)
                  </TreeItem>
                </TreeList>
                <VBar>
                  <VArrow><Chevron d="up" /></VArrow>
                  <VThumb $h={46} />
                  <VArrow $end><Chevron d="down" /></VArrow>
                </VBar>
              </TreeBox>
            </Group>

            <Group $h={304} $mt={4} $pt={3}>
              <Legend>Propriedades</Legend>
              <PropBox>
                <TypeName>SOLIDOS.ActivitySwmmConduit</TypeName>
                <PropTools>
                  <SelIcon $w={22} $h={22} $line="#333"><CategorizedIcon /></SelIcon>
                  <PlainIcon $ml={3}><AZIcon /></PlainIcon>
                  <Sep $ml={5} />
                  <FilterLabel>Search:</FilterLabel>
                  <FilterInput />
                  <ClearBtn>Clear</ClearBtn>
                </PropTools>
                <PCat $focus $up><PlusBox />Identificação</PCat>
                <PCat $up><PlusBox />Perdas de Carga</PCat>
                <PCat $up><PlusBox $open />Seção Transversal</PCat>
                <PRow $h={25}>
                  <PLabel>Lâmina Máxima</PLabel>
                  <PInput>Altura</PInput>
                  <DotsBtn>...</DotsBtn>
                </PRow>
                <PRow $h={23}>
                  <PLabel>Seção Hidráulica</PLabel>
                  <PCombo>Gótica<Chevron d="down" /></PCombo>
                </PRow>
                <PCat><PlusBox />Swmm</PCat>
                <PCat><PlusBox />Vazão Escoando</PCat>
                <PFill />
              </PropBox>
              <HelpBox $h={60} $mt={5} $pt={0} $lh={13}>
                <HelpTitle>Seção Hidráulica</HelpTitle>
                Geometria predefinida da seção hidráulica
              </HelpBox>
            </Group>
          </Col>

          <Col $w={542}>
            <Group $h={407}>
              <Legend>Designer</Legend>
              <Crumb>
                ActivityBuilder
                <Chevron d="right" c="#c8c8c8" />
                Flowchart
              </Crumb>
              <DesignerBody>
                <DesignerMain>
                  <FlowHead><FlowIcon /><FlowHeadText>Flowchart</FlowHeadText></FlowHead>
                  <Canvas>
                    <StartNode>
                      <StartDot />
                      <StartLabel>Start</StartLabel>
                    </StartNode>
                    <Connector width="20" height="32" viewBox="0 0 20 32">
                      <path d="M11 0v22" stroke="#d0d4e0" strokeWidth="2" />
                      <path d="M6 21h10l-5 10z" fill="#a8a8a8" />
                    </Connector>
                    <ActivityNode><PencilLine /><ActivityText>Gótico</ActivityText></ActivityNode>
                  </Canvas>
                </DesignerMain>
                <VBar>
                  <VArrow><Chevron d="up" /></VArrow>
                  <VThumb $h={158} $mt={10} />
                  <VArrow $end><Chevron d="down" /></VArrow>
                </VBar>
              </DesignerBody>
              <HBar>
                <HArrow><Chevron d="left" /></HArrow>
                <HThumb $w={328} $ml={13} />
                <HArrow $end><Chevron d="right" /></HArrow>
              </HBar>
              <WhiteStrip />
            </Group>

            <Group $h={204} $mt={7} $pt={4}>
              <Legend>Criação das Propriedades</Legend>
              <TableBox>
                <TableMid>
                  <TableGrid>
                    <THeadRow>
                      <THead />
                      <THead>
                        Nome
                        <Ic w={10} h={6}><path d="M5 0l5 6H0z" fill="#b0b0b0" /></Ic>
                      </THead>
                      <THead>Direção</THead>
                      <THead>Valor Padrão</THead>
                      <THead>Tipo</THead>
                    </THeadRow>
                    {rows.map((r, i) => (
                      <TRow key={i}>
                        <RowHead $sel={r.sel}>
                          {r.icon === 'gear' && <RowGear />}
                          {r.icon === 'green' && <Led c="#1fd01f" d="#109010" />}
                          {r.icon === 'red' && <Led c="#e50606" d="#a00000" />}
                          {r.sel && <Ic w={7} h={10}><path d="M1 0l6 5-6 5z" fill="#444" /></Ic>}
                        </RowHead>
                        <Cell $sel={r.sel}>{r.name}</Cell>
                        <Cell $sel={r.sel} $combo>
                          {r.dir}
                          <DropBtn $sel={r.sel} />
                        </Cell>
                        <Cell $sel={r.sel} $white={r.white}>{r.val}</Cell>
                        <Cell $sel={r.sel} $tight>{r.type}</Cell>
                      </TRow>
                    ))}
                  </TableGrid>
                  <TScroll><TScrollThumb /></TScroll>
                </TableMid>
                <TBottom><TBottomThumb /></TBottom>
              </TableBox>
            </Group>
          </Col>

          <Col $w={321} $ml={-1}>
            <Group $h={350} $px={1}>
              <Legend>Preview</Legend>
              <PreviewTools>
                <Tool $w={20} $ml={2}><MagnifierIcon /></Tool>
                <Sep $ml={7} />
                <ComboBox>Conceptual<ComboArrow /></ComboBox>
                <Sep $ml={5} />
                <Tool $w={20} $ml={8}><BucketIcon /></Tool>
                <Sep $ml={7} />
                <Tool $w={22} $ml={7}><OrbitIcon /></Tool>
                <Tool $w={28} $ml={5}><CubeIcon /><ComboArrow /></Tool>
                <Sep $ml={2} />
                <Tool $w={28} $ml={4}><CubeIcon shaded /><ComboArrow /></Tool>
                <Overflow><Ic w={7} h={8}><path d="M0 1h7M0 3h7M1 5h5l-2.5 3z" stroke="#222" strokeWidth=".8" /></Ic></Overflow>
              </PreviewTools>
              <Surface>
                <ShapeView width="318" height="284" viewBox="820 117 318 284">
                  <path d={eggPath} fill="none" stroke="#000" strokeWidth="6" />
                  <path d={eggPath} fill="none" stroke="#4f72a8" strokeWidth="3.6" />
                  <circle cx="973" cy="267" r="2" fill="#777" stroke="#000" />
                  <text x="973" y="308" fontSize="23" textAnchor="middle" fill="#3a58e8" stroke="#1c34e0" strokeWidth=".5" letterSpacing="0" fontFamily="Liberation Sans, sans-serif">Gótico</text>
                </ShapeView>
                <Coords>1.8904 ; -1.3824 ; 20.0000</Coords>
              </Surface>
            </Group>

            <Tabs>
              <Tab $w={143} $active>Propriedades do Construtor</Tab>
              <Tab $w={93}>Log de Execução</Tab>
              <Tab $w={48}>Saídas</Tab>
            </Tabs>
            <TabPanel>
              <PanelTools>
                <SelIcon $w={23} $h={21} $line="#9cc6ea" $r={3}><CategorizedIcon /></SelIcon>
                <PlainIcon $ml={3}><AZIcon /></PlainIcon>
                <Sep $ml={6} />
                <PlainIcon $ml={7}><PagesIcon /></PlainIcon>
              </PanelTools>
              <PGrid>
                <PGridRows>
                  <GridCat>
                    <GridChevron><Chevron d="down" c="#333" /></GridChevron>
                    Identificação
                  </GridCat>
                  <GridGutter>
                    {gridRows.map(r => (
                      <GridRow key={r.n} $hi={r.hi}>
                        <GridName $muted={r.muted}>{r.n}</GridName>
                        <GridValue $bold={r.bold} $muted={r.vm}>{r.v}</GridValue>
                      </GridRow>
                    ))}
                  </GridGutter>
                </PGridRows>
                <GridScroll><GridThumb /></GridScroll>
              </PGrid>
              <HelpBox $h={59} $mt={2} $pt={1} $lh={15}>
                <HelpTitle>Nome</HelpTitle>
                Nome do Item
              </HelpBox>
            </TabPanel>
          </Col>
        </Main>

        <ButtonRow>
          <Btn $w={56}>OK</Btn>
          <Btn $w={76}>Cancelar</Btn>
          <Btn $w={64}>Ajuda</Btn>
        </ButtonRow>
        <BottomLine />
        <StatusBar>
          <StatusDot />
          Verifique o quadro de propriedades, uma ou mais propriedades com erro
          <SizeGrip />
        </StatusBar>
      </Win>
    </Page>
  );
}
